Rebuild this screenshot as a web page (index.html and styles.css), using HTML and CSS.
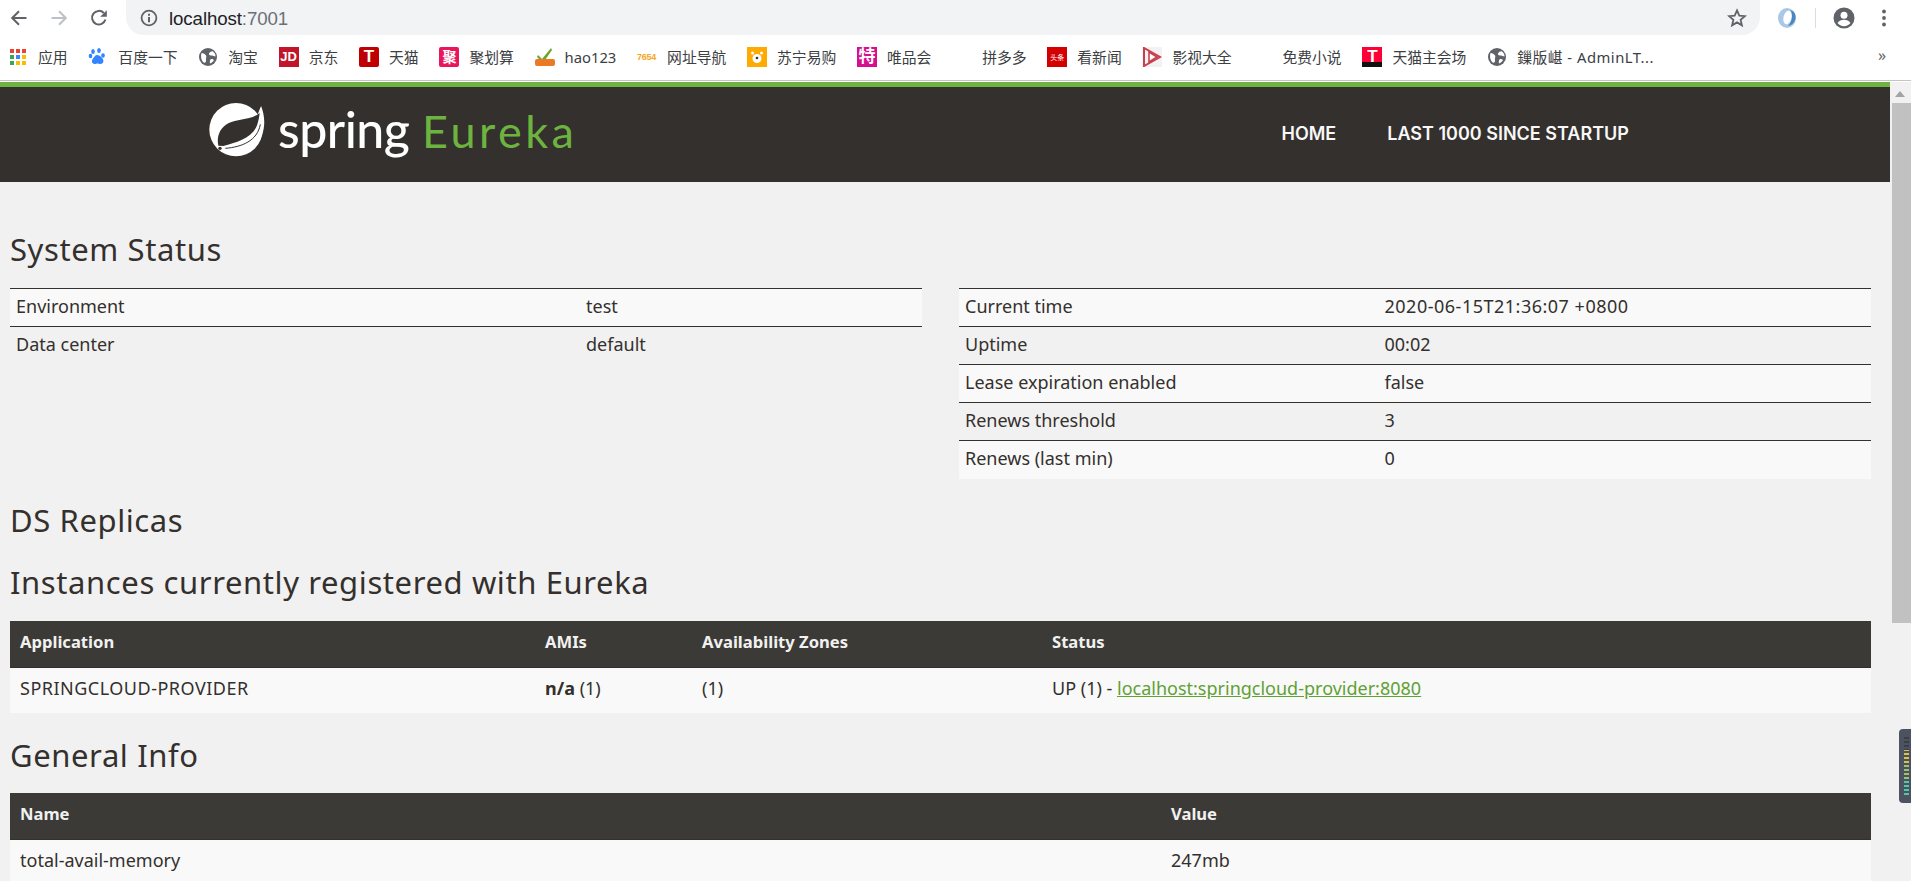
FILE: index.html
```html
<!DOCTYPE html>
<html lang="zh">
<head>
<meta charset="utf-8">
<title>Eureka</title>
<link rel="stylesheet" href="styles.css">
</head>
<body>
<div class="toolbar">
  <svg class="tool" width="20" height="20" viewBox="0 0 20 20"><path d="M17.5 10H3.5M10 3.2 3.2 10l6.8 6.8" fill="none" stroke="#5f6368" stroke-width="2"/></svg>
  <svg class="tool" width="20" height="20" viewBox="0 0 20 20"><path d="M2.5 10h14M10 3.2l6.8 6.8-6.8 6.8" fill="none" stroke="#bdc1c6" stroke-width="2"/></svg>
  <svg class="tool" width="20" height="20" viewBox="0 0 20 20"><path d="M16.4 11.5A6.8 6.8 0 1 1 14.8 5" fill="none" stroke="#5f6368" stroke-width="2"/><path d="M17.8 2.2v6.6h-6.6z" fill="#5f6368"/></svg>
  <div class="omnibox">
    <svg width="18" height="18" viewBox="0 0 18 18"><circle cx="9" cy="9" r="7.4" fill="none" stroke="#5f6368" stroke-width="1.8"/><path d="M8 8h2v5.2H8zM8 4.8h2v2H8z" fill="#5f6368"/></svg>
    <span class="url">localhost<span class="port">:7001</span></span>
    <svg class="star" width="20" height="20" viewBox="0 0 20 20"><path d="M10 2.4l2.3 5.2 5.6.5-4.3 3.7 1.3 5.5L10 14.4 5.100 17.300l1.300-5.500L2.100 8.100l5.600-.5z" fill="none" stroke="#5f6368" stroke-width="1.800"/></svg>
  </div>
  <svg class="ext" width="20" height="22" viewBox="0 0 20 22"><ellipse cx="10" cy="11" rx="9" ry="10" fill="#a9c8e8"/><ellipse cx="10.500" cy="10.500" rx="4" ry="7" fill="#fff" transform="rotate(14 10.500 10.500)"/><path d="M13 3c3 3 3 11-2 16 5-1 8-5 7.500-10-.3-3-2.500-5.500-5.500-6z" fill="#4a86c0"/></svg>
  <span class="divider"></span>
  <svg class="avatar" width="22" height="22" viewBox="0 0 22 22"><circle cx="11" cy="11" r="10.500" fill="#5f6368"/><circle cx="11" cy="8.300" r="3.500" fill="#fff"/><path d="M4.500 16c1.500-2.500 4-3.300 6.500-3.300s5 .8 6.500 3.300c-1.500 2-3.800 3.200-6.500 3.200S6 18 4.500 16z" fill="#fff"/></svg>
  <svg class="dots" width="4" height="18" viewBox="0 0 4 18"><circle cx="2" cy="2.500" r="1.900" fill="#5f6368"/><circle cx="2" cy="9" r="1.900" fill="#5f6368"/><circle cx="2" cy="15.500" r="1.900" fill="#5f6368"/></svg>
</div>

<nav class="bookmarks">
  <a class="mark"><svg class="fav" width="20" height="20" viewBox="0 0 20 20"><g><rect x="2" y="2" width="4" height="4" fill="#ea4335"/><rect x="8" y="2" width="4" height="4" fill="#ea4335"/><rect x="14" y="2" width="4" height="4" fill="#ea4335"/><rect x="2" y="8" width="4" height="4" fill="#34a853"/><rect x="8" y="8" width="4" height="4" fill="#4285f4"/><rect x="14" y="8" width="4" height="4" fill="#fbbc05"/><rect x="2" y="14" width="4" height="4" fill="#34a853"/><rect x="8" y="14" width="4" height="4" fill="#fbbc05"/><rect x="14" y="14" width="4" height="4" fill="#fbbc05"/></g></svg>应用</a>
  <a class="mark"><svg class="fav" width="20" height="20" viewBox="0 0 20 20"><g fill="#3385ff"><ellipse cx="5" cy="4.500" rx="1.800" ry="2.500"/><ellipse cx="11" cy="3.500" rx="1.800" ry="2.500"/><ellipse cx="2.500" cy="9" rx="1.800" ry="2.300"/><ellipse cx="15" cy="8.500" rx="1.800" ry="2.300"/><path d="M9 8c-2 0-2.500 2-4 3.500S3 17 7 17c1 0 1.500-.5 2.500-.5S11 17 12 17c4 0 4-3.500 2.500-5.500S11 8 9 8z"/></g></svg>百度一下</a>
  <a class="mark"><svg class="fav globe" width="20" height="20" viewBox="0 0 20 20"><circle cx="10" cy="10" r="9" fill="#5f6368"/><path d="M3.500 6c2 0 3.500 1 4.500 2.500S7.500 11 8 13s-1 3-2.500 2.500C3 13 2.500 9 3.500 6zM11 6.500c1-1.500 3-2.500 4-2 2 1.500 2.500 3 2.500 5-1.500 0-2-1-3.500-1-2 0-3.500-.5-3-2zM13 12c1.500 0 2.500.5 3 1-1 2-2.500 3-4 3.500-.5-2 0-4 1-4.500z" fill="#fff"/></svg>淘宝</a>
  <a class="mark"><span class="fav tile jd">JD</span>京东</a>
  <a class="mark"><span class="fav tile tm">T</span>天猫</a>
  <a class="mark"><span class="fav tile ju">聚</span>聚划算</a>
  <a class="mark"><svg class="fav" width="20" height="20" viewBox="0 0 20 20"><path d="M3 8l4 4 9-11 1 2-9 13-6-6z" fill="#6aa62e"/><rect x="0" y="12" width="20" height="7" rx="2" fill="#ea7a25"/></svg>hao123</a>
  <a class="mark"><span class="fav n7654">7654</span>网址导航</a>
  <a class="mark"><svg class="fav" width="20" height="20" viewBox="0 0 20 20"><rect width="20" height="20" fill="#ffaa00"/><circle cx="10" cy="11.500" r="4.500" fill="#fff"/><circle cx="5.500" cy="6" r="1.500" fill="#fff"/><circle cx="14.500" cy="6" r="1.500" fill="#fff"/><circle cx="10" cy="11" r="1.300" fill="#333"/></svg>苏宁易购</a>
  <a class="mark"><span class="fav tile te">特</span>唯品会</a>
  <a class="mark"><span class="fav blank"></span>拼多多</a>
  <a class="mark"><span class="fav tile news">头条</span>看新闻</a>
  <a class="mark"><svg class="fav" width="20" height="20" viewBox="0 0 20 20"><rect width="20" height="20" fill="#f2f2f2"/><path d="M2 1v18l16-9z" fill="none" stroke="#c9404c" stroke-width="2"/><path d="M7 5v10l8-5z" fill="#fff" stroke="#c9404c" stroke-width="1.600"/></svg>影视大全</a>
  <a class="mark"><span class="fav blank"></span>免费小说</a>
  <a class="mark"><span class="fav tile tm2">T</span>天猫主会场</a>
  <a class="mark"><svg class="fav globe" width="20" height="20" viewBox="0 0 20 20"><circle cx="10" cy="10" r="9" fill="#5f6368"/><path d="M3.500 6c2 0 3.500 1 4.500 2.500S7.500 11 8 13s-1 3-2.500 2.500C3 13 2.500 9 3.500 6zM11 6.500c1-1.500 3-2.500 4-2 2 1.500 2.500 3 2.500 5-1.500 0-2-1-3.500-1-2 0-3.500-.5-3-2zM13 12c1.500 0 2.500.5 3 1-1 2-2.500 3-4 3.500-.5-2 0-4 1-4.500z" fill="#fff"/></svg><span class="admin">鏁版嵁 - AdminLT...</span></a>
  <span class="more">»</span>
</nav>

<div class="viewport">
  <div class="page">
    <header class="site-header">
      <a class="logo">
        <svg width="57" height="57" viewBox="27 21 171 171"><circle cx="108" cy="104" r="80" fill="#fff"/><path d="M183 32C198 70 197 112 170 152L150 120z" fill="#fff"/><path d="M179 54C152 76 112 70 85 85 60 98 49 125 55 152L70 153C110 142 162 128 173 85 176 75 178 65 179 54z" fill="#34302d"/><path d="M76 160C125 156 172 138 181 88" fill="none" stroke="#34302d" stroke-width="3"/><path d="M183 32C178 38 175 44 172 52" fill="none" stroke="#34302d" stroke-width="2"/><circle cx="60" cy="160" r="5" fill="#34302d"/></svg>
        <span class="logo-spring">spring</span><span class="logo-eureka">Eureka</span>
      </a>
      <div class="site-nav"><a>HOME</a><a>LAST 1000 SINCE STARTUP</a></div>
    </header>
    <main class="content">
      <h2 class="first">System Status</h2>
      <div class="two-col">
        <table class="info info-left">
          <tr><td>Environment</td><td>test</td></tr>
          <tr><td>Data center</td><td>default</td></tr>
        </table>
        <table class="info info-right">
          <tr><td>Current time</td><td class="stamp">2020-06-15T21:36:07 +0800</td></tr>
          <tr><td>Uptime</td><td>00:02</td></tr>
          <tr><td>Lease expiration enabled</td><td>false</td></tr>
          <tr><td>Renews threshold</td><td>3</td></tr>
          <tr><td>Renews (last min)</td><td>0</td></tr>
        </table>
      </div>
      <h2 class="replicas">DS Replicas</h2>
      <h2 class="instances">Instances currently registered with Eureka</h2>
      <table class="data instances-table">
        <thead><tr><th>Application</th><th>AMIs</th><th>Availability Zones</th><th>Status</th></tr></thead>
        <tbody><tr><td class="app-name">SPRINGCLOUD-PROVIDER</td><td><b>n/a</b> (1)</td><td>(1)</td><td>UP (1) - <a class="link">localhost:springcloud-provider:8080</a></td></tr></tbody>
      </table>
      <h2 class="general">General Info</h2>
      <table class="data general-table">
        <thead><tr><th>Name</th><th>Value</th></tr></thead>
        <tbody><tr><td>total-avail-memory</td><td>247mb</td></tr></tbody>
      </table>
    </main>
  </div>
  <div class="scrollbar"><span class="arrow"></span><span class="thumb"></span></div>
  <div class="meter"></div>
</div>
</body>
</html>
```

FILE: styles.css
```css
* { box-sizing: border-box; }
html, body { margin: 0; height: 100%; overflow: hidden; }
body {
  display: flex;
  flex-direction: column;
  background: #fff;
  font-family: "Noto Sans", "Noto Sans CJK SC", sans-serif;
  color: #34302d;
}

/* Browser toolbar */
.toolbar {
  height: 35px;
  flex: none;
  display: flex;
  align-items: center;
  background: #fff;
  padding-left: 9px;
}
.tool { margin-right: 20px; flex: none; }
.omnibox {
  width: 1634px;
  margin-left: -3px;
  height: 35px;
  display: flex;
  align-items: center;
  padding: 0 13px 0 14px;
  background: #f1f3f4;
  border-radius: 0 0 18px 18px;
  flex: none;
}
.url {
  margin-left: 11px;
  font: 18.7px "Liberation Sans", sans-serif;
  color: #202124;
  letter-spacing: -0.1px;
  position: relative;
  top: 1px;
}
.port { color: #6a7076; }
.star { margin-left: auto; }
.ext { margin-left: 17px; flex: none; }
.divider { width: 1px; height: 20px; background: #dadce0; margin-left: 18px; flex: none; }
.avatar { margin-left: 17px; flex: none; }
.dots { margin-left: 27px; flex: none; }

/* Bookmarks */
.bookmarks {
  height: 46px;
  flex: none;
  display: flex;
  align-items: center;
  gap: 20.75px;
  padding: 0 0 2px 8px;
  background: #fff;
  border-bottom: 1px solid #c4c4c4;
  margin-bottom: 1px;
  font: 14.8px "Noto Sans", "Noto Sans CJK SC", sans-serif;
  color: #3c4043;
  white-space: nowrap;
}
.mark { display: flex; align-items: center; gap: 10px; }
.admin { letter-spacing: 0.5px; }
.fav { width: 20px; height: 20px; flex: none; }
.blank { display: block; }
.tile {
  display: flex;
  align-items: center;
  justify-content: center;
  color: #fff;
  font: bold 14px "Liberation Sans", "Noto Sans CJK SC", sans-serif;
  line-height: 20px;
}
.jd { background: #c0152b; font-size: 13px; }
.tm { background: #c00000; border-radius: 2px; font-size: 17px; }
.ju { background: #e8175d; border-radius: 2px; }
.te { background: #d60f8c; font-size: 17px; }
.news { background: #d40000; font-size: 7px; font-weight: normal; align-items: flex-start; padding-top: 1px; }
.tm2 { background: linear-gradient(#ff0036 0 75%, #111 75%); font-size: 17px; }
.n7654 { display: flex; align-items: center; justify-content: flex-start; font: bold 9px "Liberation Sans", sans-serif; color: #f5a623; letter-spacing: -0.3px; }
.more { position: absolute; left: 1878px; top: 44px; font-size: 16px; color: #5f6368; }

/* Viewport */
.viewport {
  flex: 1;
  min-height: 0;
  display: flex;
  position: relative;
  background: #f1f1f1;
}
.page { flex: 1; min-width: 0; overflow: hidden; }
.scrollbar {
  width: 21px;
  flex: none;
  display: flex;
  flex-direction: column;
  align-items: flex-end;
  background: #f1f1f1;
}
.arrow {
  width: 0;
  height: 0;
  margin: 9px 6px 0 0;
  border: 5px solid transparent;
  border-top: 0;
  border-bottom: 6px solid #a3a3a3;
}
.thumb { width: 19px; height: 520px; margin-top: 6px; background: #c1c1c1; }
.meter {
  position: absolute;
  right: 0;
  top: 647px;
  width: 12px;
  height: 74px;
  border-radius: 4px 0 0 4px;
  background:
    repeating-linear-gradient(#0000 0 2px, #4c5260 2px 4px) 5px 8px / 5px 58px no-repeat,
    linear-gradient(#3a3e47 0 22%, #d8c24e 22% 45%, #9cc46a 45% 75%, #4fc7a8 75%) 5px 8px / 5px 58px no-repeat,
    #4c5260;
}

/* Eureka header */
.site-header {
  height: 100px;
  border-top: 5px solid #6db33f;
  background: #34302d;
  display: flex;
  align-items: flex-start;
  padding: 15px 0 0 209px;
}
.logo { display: flex; align-items: baseline; height: 57px; color: #fff; }
.logo svg { align-self: flex-start; flex: none; }
.logo-spring {
  margin-left: 12px;
  font: 500 50px/54px "Lato", sans-serif;
  letter-spacing: -0.5px;
}
.logo-eureka {
  margin-left: 12.5px;
  font: 400 45px/54px "Lato", sans-serif;
  letter-spacing: 3.5px;
  color: #6db33f;
}
.site-nav {
  margin-left: 704px;
  display: flex;
  gap: 51px;
  padding-top: 20px;
  font: 600 18px/24px "Inter", sans-serif;
  color: #f8f8f8;
  white-space: nowrap;
}

/* Content */
.content { padding: 0 19px 0 10px; font-size: 18px; }
h2 {
  margin: 0 0 18px;
  font: 400 31px/40px "Noto Sans", sans-serif;
  letter-spacing: 0.6px;
  color: #34302d;
}
h2.first { margin-top: 47px; margin-bottom: 19px; }
h2.replicas { margin-top: 21px; margin-bottom: 22px; }
h2.instances { margin-bottom: 19px; }
h2.general { margin-top: 22px; margin-bottom: 18px; }
.two-col { display: grid; grid-template-columns: 1fr 1fr; gap: 37px; align-items: start; }

table { border-collapse: collapse; width: 100%; table-layout: fixed; }
.info tr { height: 38px; border-top: 1px solid #34302d; }
.info tr:nth-child(odd) { background: #f9f9f9; }
.info td { padding: 0 6px 4px; line-height: 20px; }
.info-left td:first-child { width: 62.5%; }
.info-right td:first-child { width: 46%; }
.stamp { letter-spacing: 0.5px; }

.data th {
  height: 47px;
  padding: 0 10px 4px;
  text-align: left;
  font-size: 16.6px;
  font-weight: 700;
  color: #f1f1f1;
  background: #3c3a36;
  border-bottom: 1px solid #34302d;
}
.data td { height: 45px; padding: 0 10px 4px; background: #f9f9f9; }
.data td.app-name { letter-spacing: 0.5px; }
.instances-table th:nth-child(1) { width: 525px; }
.instances-table th:nth-child(2) { width: 157px; }
.instances-table th:nth-child(3) { width: 350px; }
.general-table th:first-child { width: 1151px; }
.link { color: #5fa134; text-decoration: underline; }
```
